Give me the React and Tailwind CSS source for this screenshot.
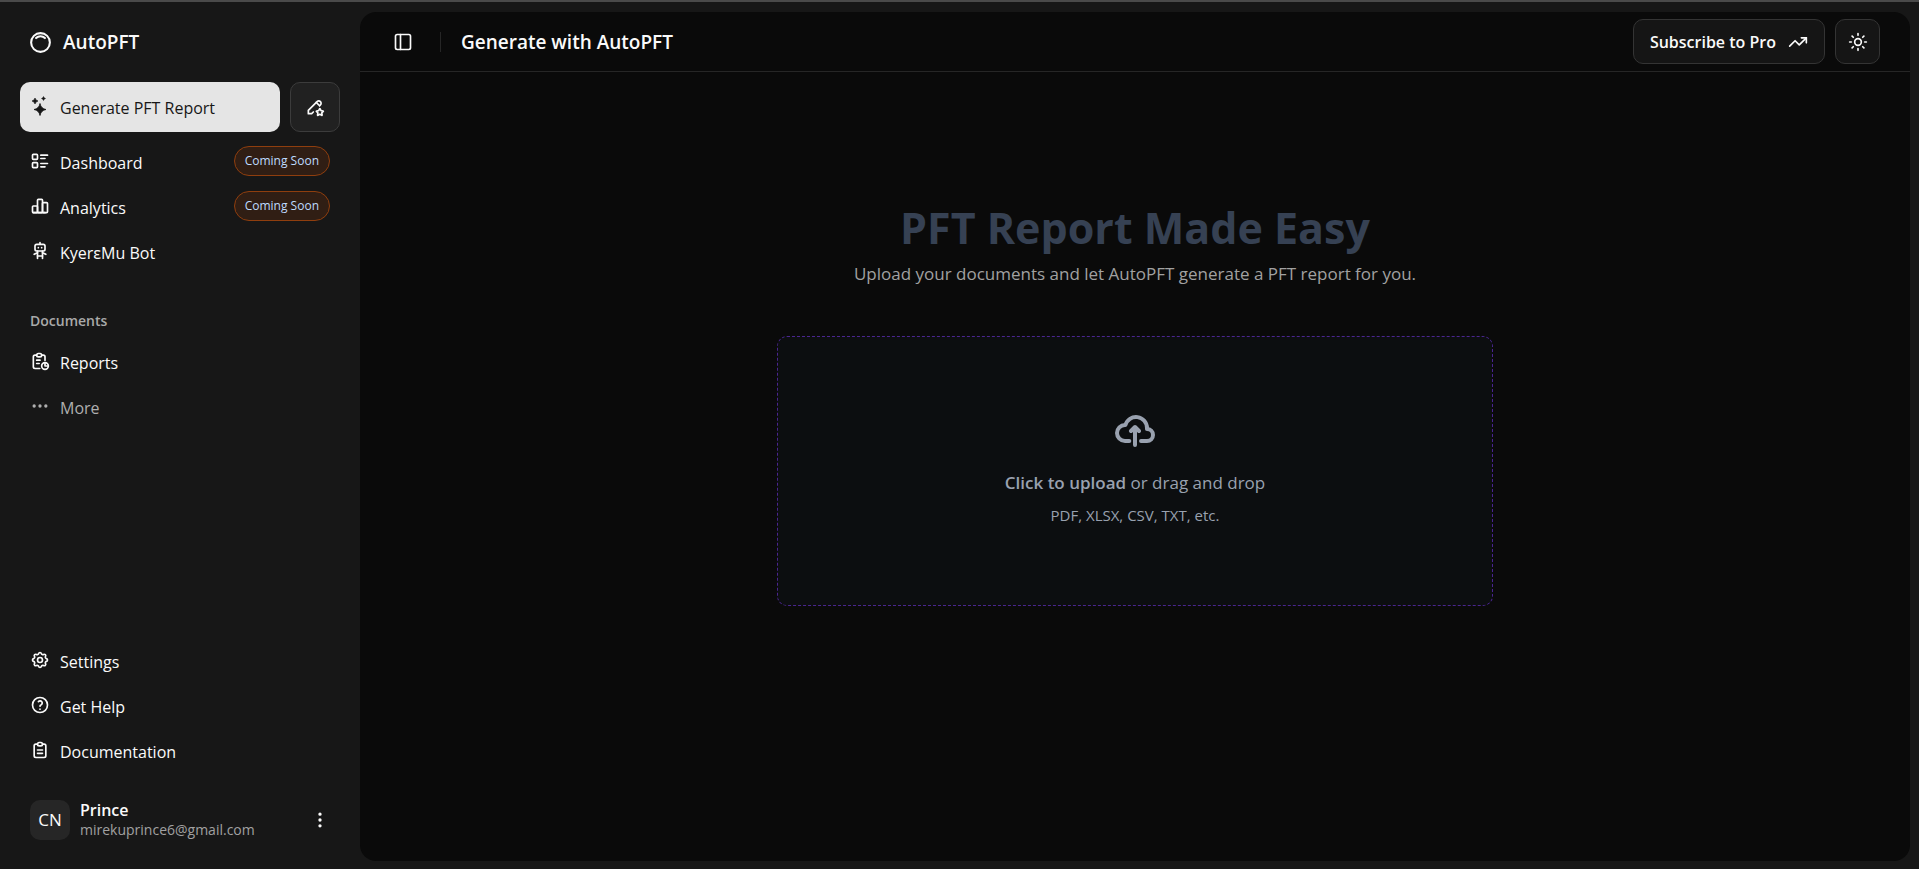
import { TbInnerShadowTop, TbPencilStar, TbListDetails, TbChartBar, TbRobot, TbReport, TbDots, TbSettings, TbHelp, TbClipboardText, TbDotsVertical } from "react-icons/tb";
import { PanelLeft, TrendingUp, Sun } from "lucide-react";

function Sparkles() {
  return (
    <svg viewBox="0 0 20 20" className="mb-1 size-5 shrink-0" fill="currentColor" aria-hidden="true">
      <path d="M10 7.5 Q11 12.7 16 13.5 Q11 14.3 10 19.5 Q9 14.3 4 13.5 Q9 12.7 10 7.5Z" stroke="currentColor" strokeWidth="0.8" strokeLinejoin="round" />
      <path d="M5 2 Q5.6 4.5 8 5 Q5.6 5.5 5 8 Q4.4 5.5 2 5 Q4.4 4.5 5 2Z" stroke="currentColor" strokeWidth="0.6" strokeLinejoin="round" />
      <path d="M13.5 0.5 Q13.9 2.2 15.5 2.5 Q13.9 2.8 13.5 4.5 Q13.1 2.8 11.5 2.5 Q13.1 2.2 13.5 0.5Z" stroke="currentColor" strokeWidth="0.5" strokeLinejoin="round" />
    </svg>
  );
}

function CloudUpload() {
  return (
    <svg viewBox="0 0 20 16" className="h-8 w-10" fill="none" stroke="currentColor" strokeWidth="2" strokeLinecap="round" strokeLinejoin="round" aria-hidden="true">
      <path d="M13 13h3a3 3 0 0 0 0-6h-.025A5.56 5.56 0 0 0 16 6.5 5.5 5.5 0 0 0 5.207 5.021C5.137 5.017 5.071 5 5 5a4 4 0 0 0 0 8h2.167M10 15V6m0 0L8 8m2-2 2 2" />
    </svg>
  );
}

function NavLink({ icon: Icon, label, soon }) {
  return (
    <li>
      <a href="#" className="flex h-10 items-center gap-2.5 px-2.5">
        <Icon className="mb-1 size-5 shrink-0" aria-hidden="true" />
        <span className="flex-1">{label}</span>
        {soon && (
          <span className="mb-1 flex h-[30px] items-center rounded-full border border-[#8f3e0e] bg-[#301e14] px-2.5 text-xs text-[#bedbff]">
            Coming Soon
          </span>
        )}
      </a>
    </li>
  );
}

export default function App() {
  return (
    <div className="flex min-h-screen border-t-2 border-[#4a4a4a] bg-[#171717] font-['Open_Sans','Noto_Sans',sans-serif] text-base leading-6 text-neutral-50">
      <aside className="flex w-[360px] shrink-0 flex-col px-5 pt-5">
        <a href="#" className="flex h-10 items-center gap-2.5 px-2 text-[19px] font-semibold">
          <TbInnerShadowTop className="size-[25px]" aria-hidden="true" />
          AutoPFT
        </a>
        <div className="mt-5 flex gap-2.5">
          <button type="button" className="flex h-[50px] w-[260px] items-center gap-2.5 rounded-[10px] bg-[#e5e5e5] px-2.5 pt-0.5 text-neutral-900">
            <Sparkles />
            Generate PFT Report
          </button>
          <button type="button" aria-label="Write report" className="flex size-[50px] items-center justify-center rounded-[10px] border border-[#3c3c3c] bg-[#212121]">
            <TbPencilStar className="size-5" />
          </button>
        </div>
        <nav className="mt-[11px] flex flex-1 flex-col">
          <ul className="flex flex-col gap-[5px]">
            <NavLink icon={TbListDetails} label="Dashboard" soon />
            <NavLink icon={TbChartBar} label="Analytics" soon />
            <NavLink icon={TbRobot} label="KyerɛMu Bot" />
          </ul>
          <h2 className="mt-7 mb-0.5 flex h-10 items-center px-2.5 text-sm font-semibold text-[#a9a9a9]">Documents</h2>
          <ul className="flex flex-col gap-[5px]">
            <NavLink icon={TbReport} label="Reports" />
            <li>
              <button type="button" className="flex h-10 w-full items-center gap-2.5 px-2.5 text-[#afafaf]">
                <TbDots className="mb-1 size-5" aria-hidden="true" />
                More
              </button>
            </li>
          </ul>
          <ul className="mt-auto flex flex-col gap-[5px]">
            <NavLink icon={TbSettings} label="Settings" />
            <NavLink icon={TbHelp} label="Get Help" />
            <NavLink icon={TbClipboardText} label="Documentation" />
          </ul>
        </nav>
        <button type="button" className="mt-[18px] mb-[19px] flex h-[60px] items-center gap-2.5 px-2.5 text-left">
          <span className="flex size-10 items-center justify-center rounded-[10px] bg-[#262626] text-[17px]">CN</span>
          <span className="flex flex-1 flex-col">
            <span className="leading-5 font-semibold">Prince</span>
            <span className="text-sm leading-5 text-[#a1a1a1]">mirekuprince6@gmail.com</span>
          </span>
          <TbDotsVertical className="size-5" aria-hidden="true" />
        </button>
      </aside>

      <main className="mt-2.5 mr-[9px] mb-2 flex flex-1 flex-col rounded-2xl bg-[#0a0a0a]">
        <header className="flex h-[60px] items-center border-b border-[#262626] px-[30px]">
          <button type="button" aria-label="Toggle sidebar" className="flex size-[25px] items-center justify-center">
            <PanelLeft className="size-5" />
          </button>
          <div className="mr-5 ml-[25px] h-5 w-px bg-[#262626]" />
          <h1 className="text-[19px] font-semibold">Generate with AutoPFT</h1>
          <div className="ml-auto flex gap-2.5">
            <button type="button" className="flex h-[45px] items-center gap-3 rounded-[10px] border border-[#343434] bg-[#151515] px-4 font-semibold">
              Subscribe to Pro
              <TrendingUp className="size-5" aria-hidden="true" />
            </button>
            <button type="button" aria-label="Toggle theme" className="flex size-[45px] items-center justify-center rounded-[10px] border border-[#343434] bg-[#151515]">
              <Sun className="size-5" />
            </button>
          </div>
        </header>
        <section className="flex flex-1 flex-col items-center px-10 pt-32">
          <h2 className="text-[43px] leading-[56px] font-bold text-[#364153]">PFT Report Made Easy</h2>
          <p className="text-[17px] leading-9 text-[#a1a1a1]">Upload your documents and let AutoPFT generate a PFT report for you.</p>
          <label className="mt-11 flex h-[270px] w-full max-w-[716px] cursor-pointer flex-col items-center justify-center rounded-[10px] border border-dashed border-[#4a2590] bg-[#0c0e10] text-[#99a1af]">
            <CloudUpload />
            <span className="mt-6 text-[17px] leading-6"><b className="font-semibold">Click to upload</b> or drag and drop</span>
            <span className="mt-2 text-[15px]">PDF, XLSX, CSV, TXT, etc.</span>
            <input type="file" className="sr-only" />
          </label>
        </section>
      </main>
    </div>
  );
}
